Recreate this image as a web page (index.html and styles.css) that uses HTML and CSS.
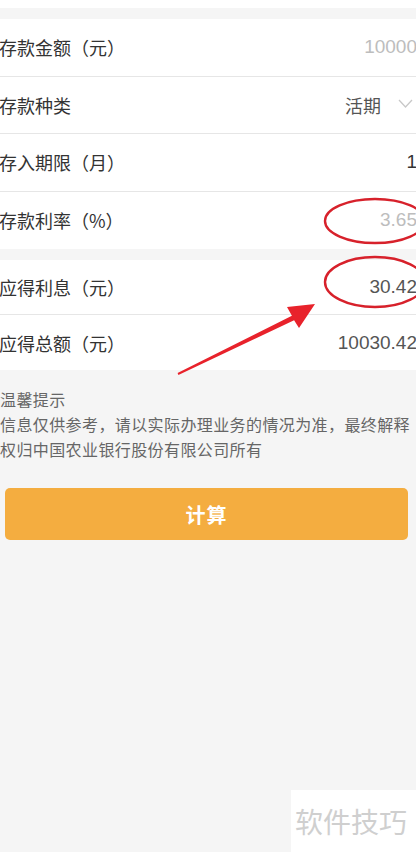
FILE: index.html
```html
<!DOCTYPE html>
<html lang="zh-CN">
<head>
<meta charset="utf-8">
<title>存款计算器</title>
<link rel="stylesheet" href="styles.css">
</head>
<body>
<div class="page">
  <div class="top-strip"></div>
  <section class="group group-a">
    <div class="row"><span class="label">存款金额（元）</span><span class="value placeholder">10000</span></div>
    <div class="row"><span class="label">存款种类</span><span class="value select">活期<svg class="chev" width="15" height="10" viewBox="0 0 15 10"><polyline points="1,1 7.5,8 14,1" fill="none" stroke="#c8c8c8" stroke-width="1.3"/></svg></span></div>
    <div class="row"><span class="label">存入期限（月）</span><span class="value dark">1</span></div>
    <div class="row"><span class="label">存款利率（%）</span><span class="value placeholder">3.65</span></div>
  </section>
  <section class="group group-b">
    <div class="row"><span class="label">应得利息（元）</span><span class="value mid">30.42</span></div>
    <div class="row"><span class="label">应得总额（元）</span><span class="value mid">10030.42</span></div>
  </section>
  <div class="tips">
    <p class="tips-title">温馨提示</p>
    <p class="tips-body">信息仅供参考，请以实际办理业务的情况为准，最终解释权归中国农业银行股份有限公司所有</p>
  </div>
  <div class="btn-wrap"><button class="btn">计算</button></div>

  <svg class="marks" width="416" height="852" viewBox="0 0 416 852">
    <ellipse cx="375" cy="221" rx="50" ry="22" fill="none" stroke="#d7212b" stroke-width="2.4"/>
    <ellipse cx="375" cy="282" rx="50" ry="25" fill="none" stroke="#d7212b" stroke-width="2.4"/>
    <polygon points="177.6,373.1 291.9,315.8 287,307 315,304 299,328 294.1,320.2 178.4,374.9" fill="#e8222b"/>
  </svg>
  <div class="watermark">软件技巧</div>
</div>
</body>
</html>
```

FILE: styles.css
```css
* { box-sizing: border-box; margin: 0; padding: 0; }
html, body {
  width: 416px;
  height: 852px;
  overflow: hidden;
  background: #f5f5f5;
}
body {
  font-family: "Noto Sans CJK SC", sans-serif;
  color: #333;
}
.page {
  position: relative;
  width: 416px;
  height: 852px;
}
.top-strip {
  height: 8px;
  background: #fff;
}
.group {
  background: #fff;
  margin-top: 11px;
}
.group-a .row { height: 57.5px; }
.group-b .row { height: 55px; }
.row {
  display: flex;
  align-items: center;
  justify-content: space-between;
  border-bottom: 1px solid #e6e6e6;
}
.row:last-child { border-bottom: none; }
.label {
  color: #333;
  font-size: 18px;
  margin-left: -1px;
}
.value {
  font-family: "Liberation Sans", "Noto Sans CJK SC", sans-serif;
  margin-right: -1px;
  font-size: 19px;
}
.placeholder { color: #bdbdbd; }
.dark { color: #333; }
.mid { color: #555; }
.select {
  display: flex;
  align-items: center;
  color: #555;
  margin-right: 3px;
  gap: 17px;
  font-family: "Noto Sans CJK SC", sans-serif;
  font-size: 18px;
}
.chev { display: block; margin-top: -2px; }
.tips {
  padding: 17px 6px 0 0;
  font-size: 16px;
  line-height: 25px;
  letter-spacing: 0.4px;
  color: #666;
}
.btn-wrap {
  padding: 26px 8px 0 5px;
}
.btn {
  width: 100%;
  height: 52px;
  border: none;
  border-radius: 5px;
  background: #f4ad40;
  color: #fff;
  font-family: "Noto Sans CJK SC", sans-serif;
  font-size: 20px;
  font-weight: 700;
  letter-spacing: 1px;
}
.marks {
  position: absolute;
  top: 0;
  left: 0;
  pointer-events: none;
}
.watermark {
  position: absolute;
  left: 291px;
  top: 790px;
  width: 125px;
  height: 62px;
  background: #fff;
  color: #cfcfcf;
  font-size: 28px;
  line-height: 62px;
  padding-left: 4px;
  white-space: nowrap;
}
```
